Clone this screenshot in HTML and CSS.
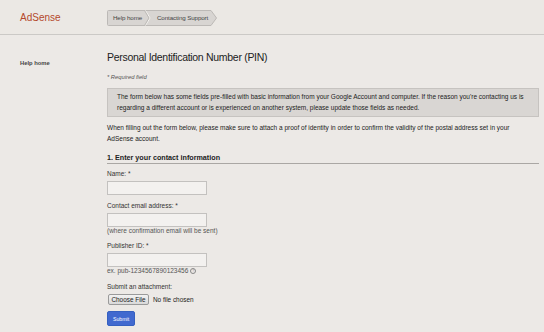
FILE: index.html
```html
<!DOCTYPE html>
<html lang="en">
<head>
    <meta charset="UTF-8">
    <title>AdSense Help - Personal Identification Number (PIN)</title>
    <link rel="stylesheet" href="styles.css">
</head>
<body>
<div class="header">
    <div class="logo">AdSense</div>
    <div class="crumbs">
        <svg class="crumbs-bg" width="111" height="16" viewBox="0 0 111 16">
            <path d="M1.5 0.5 H104 L109.5 8 L104 15.5 H1.5 Q0.5 15.5 0.5 14.5 V1.5 Q0.5 0.5 1.5 0.5 Z" fill="#d8d5d2" stroke="#bcb9b6"/>
            <path d="M38.5 0.5 L43 8 L38.5 15.5" fill="none" stroke="#f4f2ef"/>
            <path d="M37.5 0.5 L42 8 L37.5 15.5" fill="none" stroke="#bcb9b6"/>
        </svg>
        <span class="crumb first">Help home</span>
        <span class="crumb">Contacting Support</span>
    </div>
</div>
<div class="main">
    <div class="sidebar">
        <a class="nav-link" href="#">Help home</a>
    </div>
    <div class="content">
        <h1>Personal Identification Number (PIN)</h1>
        <p class="required">* Required field</p>
        <div class="notice">
            The form below has some fields pre-filled with basic information from your Google Account and computer. If the reason you're contacting us is regarding a different account or is experienced on another system, please update those fields as needed.
        </div>
        <p class="intro">When filling out the form below, please make sure to attach a proof of identity in order to confirm the validity of the postal address set in your AdSense account.</p>
        <h2>1. Enter your contact information</h2>
        <form>
            <label class="label first-label">Name: *</label>
            <input class="field" type="text">
            <label class="label">Contact email address: *</label>
            <input class="field" type="text">
            <div class="hint">(where confirmation email will be sent)</div>
            <label class="label">Publisher ID: *</label>
            <input class="field" type="text">
            <div class="hint">ex. pub-1234567890123456 <span class="info">?</span></div>
            <label class="label attach-label">Submit an attachment:</label>
            <div class="file-row">
                <span class="file-btn">Choose File</span>
                <span class="file-name">No file chosen</span>
            </div>
            <button class="submit" type="button">Submit</button>
        </form>
    </div>
</div>
</body>
</html>
```

FILE: styles.css
```css
body {
    margin: 0;
    background: #ece9e6;
    font-family: 'Liberation Sans', Arial, sans-serif;
    font-size: 6.5px;
    color: #222;
}
.header {
    height: 35px;
    box-sizing: border-box;
    display: flex;
    align-items: center;
    padding-left: 20px;
    background: #ebe8e4;
    border-bottom: 1px solid #cbc9c6;
}
.logo {
    width: 87px;
    font-size: 10px;
    color: #b4482c;
    margin-top: 1px;
}
.crumbs {
    position: relative;
    display: flex;
    align-items: center;
    height: 16px;
    width: 111px;
    margin-top: 1px;
}
.crumbs-bg {
    position: absolute;
    left: 0;
    top: 0;
}
.crumb {
    position: relative;
    color: #444;
    font-size: 6.2px;
    letter-spacing: -0.1px;
}
.crumb.first {
    margin-left: 6px;
    width: 44px;
}
.main {
    display: flex;
}
.sidebar {
    width: 87px;
    padding-left: 20px;
    padding-top: 24px;
}
.nav-link {
    display: block;
    line-height: 8px;
    font-weight: bold;
    color: #444;
    text-decoration: none;
    font-size: 5.8px;
}
.content {
    width: 432px;
}
h1 {
    margin: 15px 0 0;
    font-size: 10.5px;
    letter-spacing: -0.3px;
    line-height: 14px;
    font-weight: normal;
    color: #222;
}
.required {
    margin: 9px 0 0;
    line-height: 8px;
    font-style: italic;
    font-size: 5.8px;
    color: #555;
}
.notice {
    margin-top: 7px;
    padding: 3px 9px;
    line-height: 10.5px;
    background: #d9d6d3;
    border: 1px solid #c6c3c0;
}
.intro {
    margin: 5px 0 0;
    max-width: 415px;
    line-height: 11px;
}
h2 {
    margin: 9px 0 0;
    font-size: 7.2px;
    line-height: 10px;
    font-weight: bold;
    border-bottom: 1px solid #aaa7a4;
}
form {
    display: flex;
    flex-direction: column;
    align-items: flex-start;
}
.label {
    display: block;
    margin-top: 7px;
    margin-bottom: 3px;
    line-height: 8px;
    color: #333;
}
.first-label {
    margin-top: 6px;
}
.field {
    width: 100px;
    height: 14px;
    box-sizing: border-box;
    margin: 0;
    background: #f3f1ef;
    border: 1px solid #c3c1bf;
}
.hint {
    line-height: 8px;
    color: #555;
}
.info {
    display: inline-block;
    width: 4px;
    height: 4px;
    line-height: 4px;
    border: 1px solid #888;
    border-radius: 50%;
    font-size: 3.5px;
    text-align: center;
    color: #888;
    vertical-align: middle;
}
.attach-label {
    margin-top: 8px;
}
.file-row {
    display: flex;
    align-items: center;
    gap: 4px;
    margin-left: 1px;
}
.file-btn {
    width: 41px;
    height: 11px;
    box-sizing: border-box;
    line-height: 9px;
    text-align: center;
    background: linear-gradient(#f2f2f2, #d9d9d9);
    border: 1px solid #9a9a9a;
    border-radius: 2px;
    color: #222;
    font-size: 6.4px;
}
.file-name {
    color: #222;
    font-size: 6.4px;
}
.submit {
    margin-top: 6px;
    width: 28px;
    height: 15px;
    padding: 0;
    border: 1px solid #3560c0;
    border-radius: 2px;
    background: #4169cf;
    color: #fff;
    font-family: 'Liberation Sans', Arial, sans-serif;
    font-size: 5.2px;
}
```
